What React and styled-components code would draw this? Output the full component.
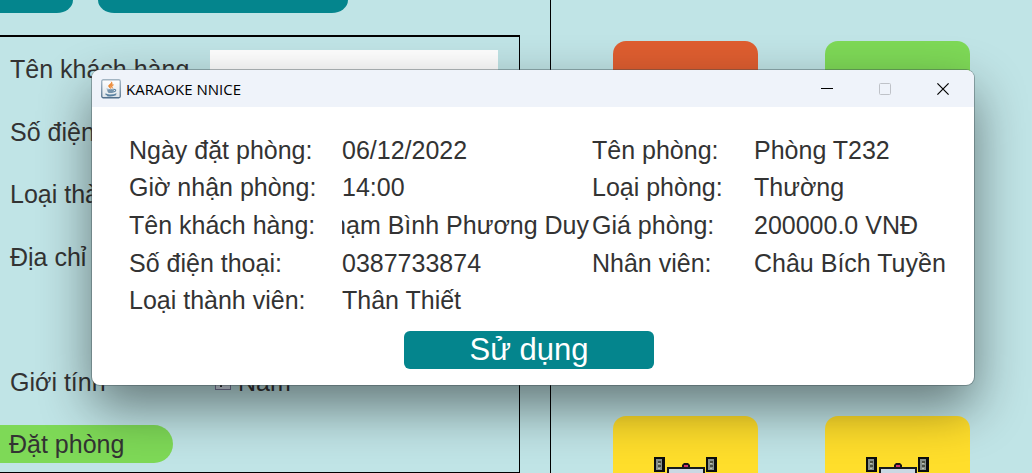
import React from "react";
import styled, { createGlobalStyle } from "styled-components";

const GlobalStyle = createGlobalStyle`
  *, *::before, *::after { box-sizing: border-box; }
  html, body, #root { height: 100%; }
  body {
    margin: 0;
    overflow: hidden;
    background: #c0e4e6;
    color: #333333;
    font-family: "Liberation Sans", Arial, sans-serif;
    font-size: 25px;
    line-height: 28px;
  }
  button, input, textarea { font: inherit; color: inherit; }
`;

const Page = styled.main`
  position: relative;
  display: grid;
  grid-template-columns: minmax(0, 551fr) minmax(0, 481fr);
  height: 100%;
  overflow: hidden;
`;

const BookingPane = styled.section`
  display: flex;
  flex-direction: column;
  min-height: 0;
  border-right: 1px solid #000000;
  padding-right: 30px;
`;

const TopActions = styled.div`
  display: flex;
  gap: 25px;
  height: 13px;
  flex: none;
`;

const TopAction = styled.button`
  width: ${(p) => (p.$wide ? "250px" : "73px")};
  height: 13px;
  padding: 0;
  border: 0;
  border-radius: ${(p) => (p.$wide ? "0 0 20px 20px / 0 0 16px 16px" : "0 0 20px 0 / 0 0 16px 0")};
  background: #04858d;
`;

const BookingForm = styled.form`
  flex: 1;
  display: flex;
  flex-direction: column;
  justify-content: space-between;
  margin-top: 22px;
  padding: 13px 21px 9px 0;
  border: solid #000000;
  border-width: 2px 1px 1px 0;
`;

const FormRow = styled.div`
  display: grid;
  grid-template-columns: 200px minmax(0, 1fr);
  align-items: center;
  height: 38px;
  padding-left: 10px;
`;

const TextField = styled.input`
  width: 100%;
  height: 38px;
  border: 0;
  padding: 0 4px;
  background: #ffffff;
`;

const TickLabel = styled.label`
  display: flex;
  align-items: center;
  gap: 7px;
  padding-left: 5px;
`;

const TickBox = styled.input`
  appearance: none;
  width: 16px;
  height: 16px;
  margin: 0;
  border: 1px solid #7a7a9c;
  background: linear-gradient(#333333, #333333) 4px 5px / 2px 7px no-repeat, #d6e0ec;
`;

const StatusButton = styled.button`
  width: 173px;
  height: 38px;
  padding: 0 0 0 9px;
  border: 0;
  border-radius: 0 19px 19px 0;
  background: #7ed957;
  text-align: left;
`;

const RoomPane = styled.section`
  display: grid;
  grid-template-columns: 145px 145px;
  grid-auto-rows: 250px;
  gap: 125px 67px;
  padding: 41px 0 0 62px;
  min-height: 0;
  overflow: hidden;
`;

const RoomCard = styled.button`
  display: flex;
  justify-content: center;
  align-items: flex-start;
  padding: 41px 0 0;
  border: 0;
  border-radius: 13px;
  background: ${(p) => p.$color};
`;

const Dialog = styled.section`
  position: absolute;
  top: 70px;
  left: 92px;
  right: 58px;
  border-radius: 8px;
  background: #ffffff;
  box-shadow: 0 0 0 1px rgba(60, 75, 80, 0.4), 0 22px 52px rgba(0, 0, 0, 0.48);
`;

const TitleBar = styled.header`
  display: flex;
  align-items: center;
  height: 37px;
  padding: 0 2px 0 9px;
  border-radius: 8px 8px 0 0;
  background: #eff3fa;
`;

const Title = styled.h1`
  flex: 1;
  margin: 0 0 0 5px;
  color: #000000;
  font: 400 15px/20px "Open Sans", "Noto Sans", sans-serif;
`;

const WindowButton = styled.button`
  display: flex;
  align-items: center;
  justify-content: center;
  width: 58px;
  height: 35px;
  padding: 0;
  border: 0;
  background: transparent;
`;

const DialogBody = styled.div`
  display: flex;
  flex-direction: column;
  align-items: center;
  gap: 12px;
  padding: 24px 45px 16px 37px;
`;

const Details = styled.dl`
  display: grid;
  grid-template-columns: 213fr 250fr 162fr 175fr;
  grid-template-rows: repeat(5, 1fr);
  align-items: center;
  width: 100%;
  height: 188px;
  margin: 0;
  white-space: nowrap;
`;

const Term = styled.dt`
  min-width: 0;
  grid-column: ${(p) => (p.$second ? 3 : 1)};
  grid-row: ${(p) => p.$row};
`;

const Value = styled.dd`
  display: flex;
  justify-content: ${(p) => (p.$end ? "flex-end" : "flex-start")};
  min-width: 0;
  margin: 0;
  padding-right: ${(p) => (p.$end ? "3px" : "0")};
  overflow: ${(p) => (p.$end ? "hidden" : "visible")};
  grid-column: ${(p) => (p.$second ? 4 : 2)};
  grid-row: ${(p) => p.$row};
`;

const UseButton = styled.button`
  width: 250px;
  height: 38px;
  padding: 0;
  border: 0;
  border-radius: 6px;
  background: #04858d;
  color: #ffffff;
  font-size: 31px;
  line-height: 36px;
`;

const bookingDetails = [
  ["Ngày đặt phòng:", "06/12/2022"],
  ["Giờ nhận phòng:", "14:00"],
  ["Tên khách hàng:", "Phạm Bình Phương Duy", true],
  ["Số điện thoại:", "0387733874"],
  ["Loại thành viên:", "Thân Thiết"],
];

const roomDetails = [
  ["Tên phòng:", "Phòng T232"],
  ["Loại phòng:", "Thường"],
  ["Giá phòng:", "200000.0 VNĐ"],
  ["Nhân viên:", "Châu Bích Tuyền"],
];

const fields = [
  ["name", "Tên khách hàng"],
  ["phone", "Số điện thoại"],
  ["level", "Loại thành viên"],
  ["address", "Địa chỉ"],
];

function JavaIcon() {
  return (
    <svg width="20" height="20" viewBox="0 0 20 20" aria-hidden="true">
      <defs>
        <linearGradient id="tile" x1="0" y1="0" x2="0" y2="1">
          <stop offset="0" stopColor="#ffffff" />
          <stop offset="1" stopColor="#dce3e9" />
        </linearGradient>
        <linearGradient id="rim" x1="0" y1="0" x2="0" y2="1">
          <stop offset="0" stopColor="#a3b5c3" />
          <stop offset="1" stopColor="#516f8b" />
        </linearGradient>
      </defs>
      <rect x="0.75" y="0.75" width="18.5" height="18" rx="1.5" fill="url(#tile)" stroke="url(#rim)" strokeWidth="1.3" />
      <path d="M10.3 2.8c1.4 1.7-3 2.6-2.6 4.5.2 1 1.4 1.5 1.9 2.1-.2-1.3-.6-1.8.3-2.6 1.2-1 1.6-2.5.4-4Z" fill="#ec8a37" stroke="#ec8a37" strokeWidth=".9" />
      <path d="M12.5 5.6c-1.8.7-2.4 1.6-1.5 2.5.4.5.1.9-.2 1.2" fill="none" stroke="#ec8a37" strokeWidth="1.3" />
      <path d="M6 10.1c1.6.6 5 .6 6.9 0" fill="none" stroke="#7c9bb3" strokeWidth=".9" strokeLinecap="round" />
      <path d="M6.2 10.7h6.8c0 1.5-.8 3-1.6 3.3H7.8c-.9-.4-1.6-1.8-1.6-3.3Z" fill="#7593ab" />
      <path d="M13 10.5c2.4-.5 2.4 1.9-.5 2.4M5 14.9c-1.4 1.2 8.2 1.5 10-.1M6.4 16.7c3 .4 6.3.2 8.2-.8" fill="none" stroke="#58809f" strokeWidth="1.05" strokeLinecap="round" />
    </svg>
  );
}

function Speaker({ x }) {
  return (
    <g>
      <rect x={x} y="0" width="11" height="15" fill="#0b0d0e" />
      <rect x={x + 2} y="2" width="6" height="11" fill="#87908b" />
      <path d={`M${x + 4} 4h3v2h-3zM${x + 4} 8h3v2h-3z`} fill="#4d5144" />
      <path d={`M${x + 4} 6h2v1h-2zM${x + 4} 11h2v1h-2z`} fill="#bfc4ae" />
    </g>
  );
}

function RoomPicture() {
  return (
    <svg width="63" height="64" viewBox="0 0 63 64" aria-hidden="true">
      <Speaker x={0} />
      <Speaker x={52} />
      <path d="M28 10v-2l2-2h4l2 2v2z" fill="#171417" />
      <rect x="30" y="8" width="4" height="2" fill="#d0386b" />
      <rect x="13" y="10" width="38" height="26" fill="#15191c" />
      <rect x="15" y="12" width="34" height="22" fill="#cbd8e3" />
      <path d="M8 44h47v14H8z" fill="#15191c" />
    </svg>
  );
}

export default function App() {
  return (
    <>
      <GlobalStyle />
      <Page>
        <BookingPane>
          <TopActions>
            <TopAction type="button" />
            <TopAction type="button" $wide />
          </TopActions>
          <BookingForm>
            {fields.map(([id, label]) => (
              <FormRow key={id}>
                <label htmlFor={id}>{label}</label>
                <TextField id={id} />
              </FormRow>
            ))}
            <FormRow />
            <FormRow>
              <span>Giới tính</span>
              <TickLabel>
                <TickBox type="checkbox" defaultChecked />
                Nam
              </TickLabel>
            </FormRow>
            <StatusButton type="button">Đặt phòng</StatusButton>
          </BookingForm>
        </BookingPane>

        <RoomPane>
          <RoomCard type="button" $color="#df5e30" />
          <RoomCard type="button" $color="#7ed957" />
          <RoomCard type="button" $color="#ffde2b"><RoomPicture /></RoomCard>
          <RoomCard type="button" $color="#ffde2b"><RoomPicture /></RoomCard>
        </RoomPane>

        <Dialog role="dialog" aria-labelledby="dialog-title">
          <TitleBar>
            <JavaIcon />
            <Title id="dialog-title">KARAOKE NNICE</Title>
            <WindowButton type="button" aria-label="Minimize">
              <svg width="12" height="12" viewBox="0 0 12 12"><path d="M0 5.5h12" stroke="#000" /></svg>
            </WindowButton>
            <WindowButton type="button" aria-label="Maximize" disabled>
              <svg width="12" height="12" viewBox="0 0 12 12"><rect x=".5" y=".5" width="11" height="11" rx="1" fill="none" stroke="#bfc2c8" /></svg>
            </WindowButton>
            <WindowButton type="button" aria-label="Close">
              <svg width="12" height="12" viewBox="0 0 12 12"><path d="M.4.4l11.2 11.2M11.6.4.4 11.6" stroke="#000" strokeWidth="1.2" /></svg>
            </WindowButton>
          </TitleBar>
          <DialogBody>
            <Details>
              {bookingDetails.map(([term, value, end], i) => (
                <React.Fragment key={term}>
                  <Term $row={i + 1}>{term}</Term>
                  <Value $row={i + 1} $end={end}><span>{value}</span></Value>
                </React.Fragment>
              ))}
              {roomDetails.map(([term, value], i) => (
                <React.Fragment key={term}>
                  <Term $second $row={i + 1}>{term}</Term>
                  <Value $second $row={i + 1}><span>{value}</span></Value>
                </React.Fragment>
              ))}
            </Details>
            <UseButton type="button">Sử dụng</UseButton>
          </DialogBody>
        </Dialog>
      </Page>
    </>
  );
}
